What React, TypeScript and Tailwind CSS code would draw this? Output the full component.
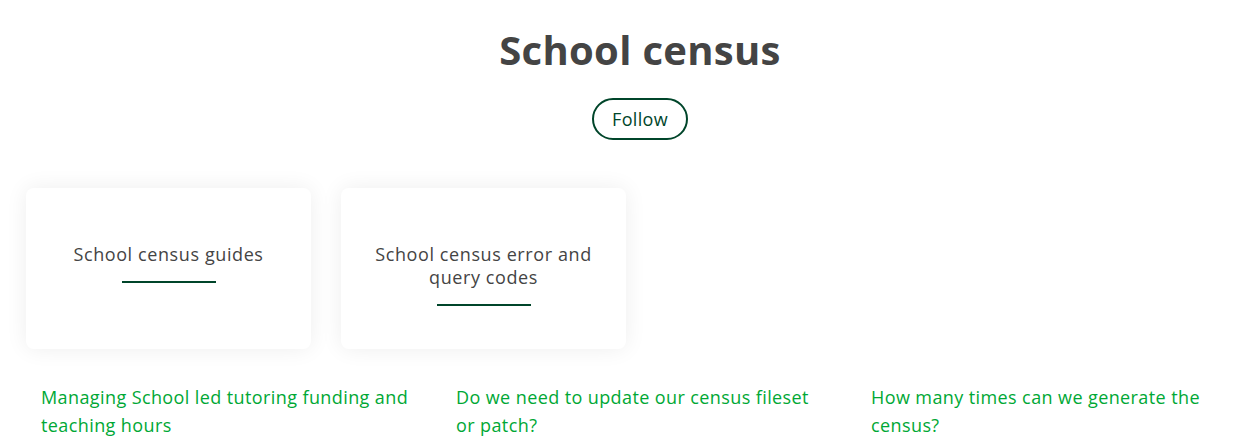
const cards = [
  { title: 'School census guides' },
  { title: 'School census error and query codes' },
];

const links = [
  'Managing School led tutoring funding and teaching hours',
  'Do we need to update our census fileset or patch?',
  'How many times can we generate the census?',
];

export default function App() {
  return (
    <div className="w-full overflow-hidden bg-white" style={{ fontFamily: '"Open Sans", "Liberation Sans", sans-serif' }}>
      <div className="w-[1280px] px-[26px]">
        <h1 className="pt-[26px] text-center text-[40px] font-bold leading-[48px] tracking-[0.3px] text-[#444444]">School census</h1>
        <div className="mt-[24px] flex justify-center">
          <button className="h-[42px] rounded-full border-2 border-[#00452a] px-[18px] text-[18px] tracking-[0.3px] text-[#00452a]">Follow</button>
        </div>

        <div className="mt-[48px] flex gap-[30px]">
          {cards.map((c) => (
            <a
              key={c.title}
              href="#"
              className="flex h-[161px] w-[285px] flex-col items-center rounded-lg bg-white px-[26px] pt-[55px] text-center shadow-[0_0_22px_rgba(0,0,0,0.07)]"
            >
              <span className="text-[18px] leading-[23px] tracking-[0.6px] text-[#444444]">{c.title}</span>
              <span className="mt-[15px] h-[2px] w-[94px] bg-[#00452a]" />
            </a>
          ))}
        </div>

        <div className="mt-[34px] grid grid-cols-[415px_415px_415px] pl-[15px]">
          {links.map((l) => (
            <a key={l} href="#" className="pr-[40px] text-[18px] leading-[28px] tracking-[0.4px] text-[#00a835]">
              {l}
            </a>
          ))}
        </div>
      </div>
    </div>
  );
}
